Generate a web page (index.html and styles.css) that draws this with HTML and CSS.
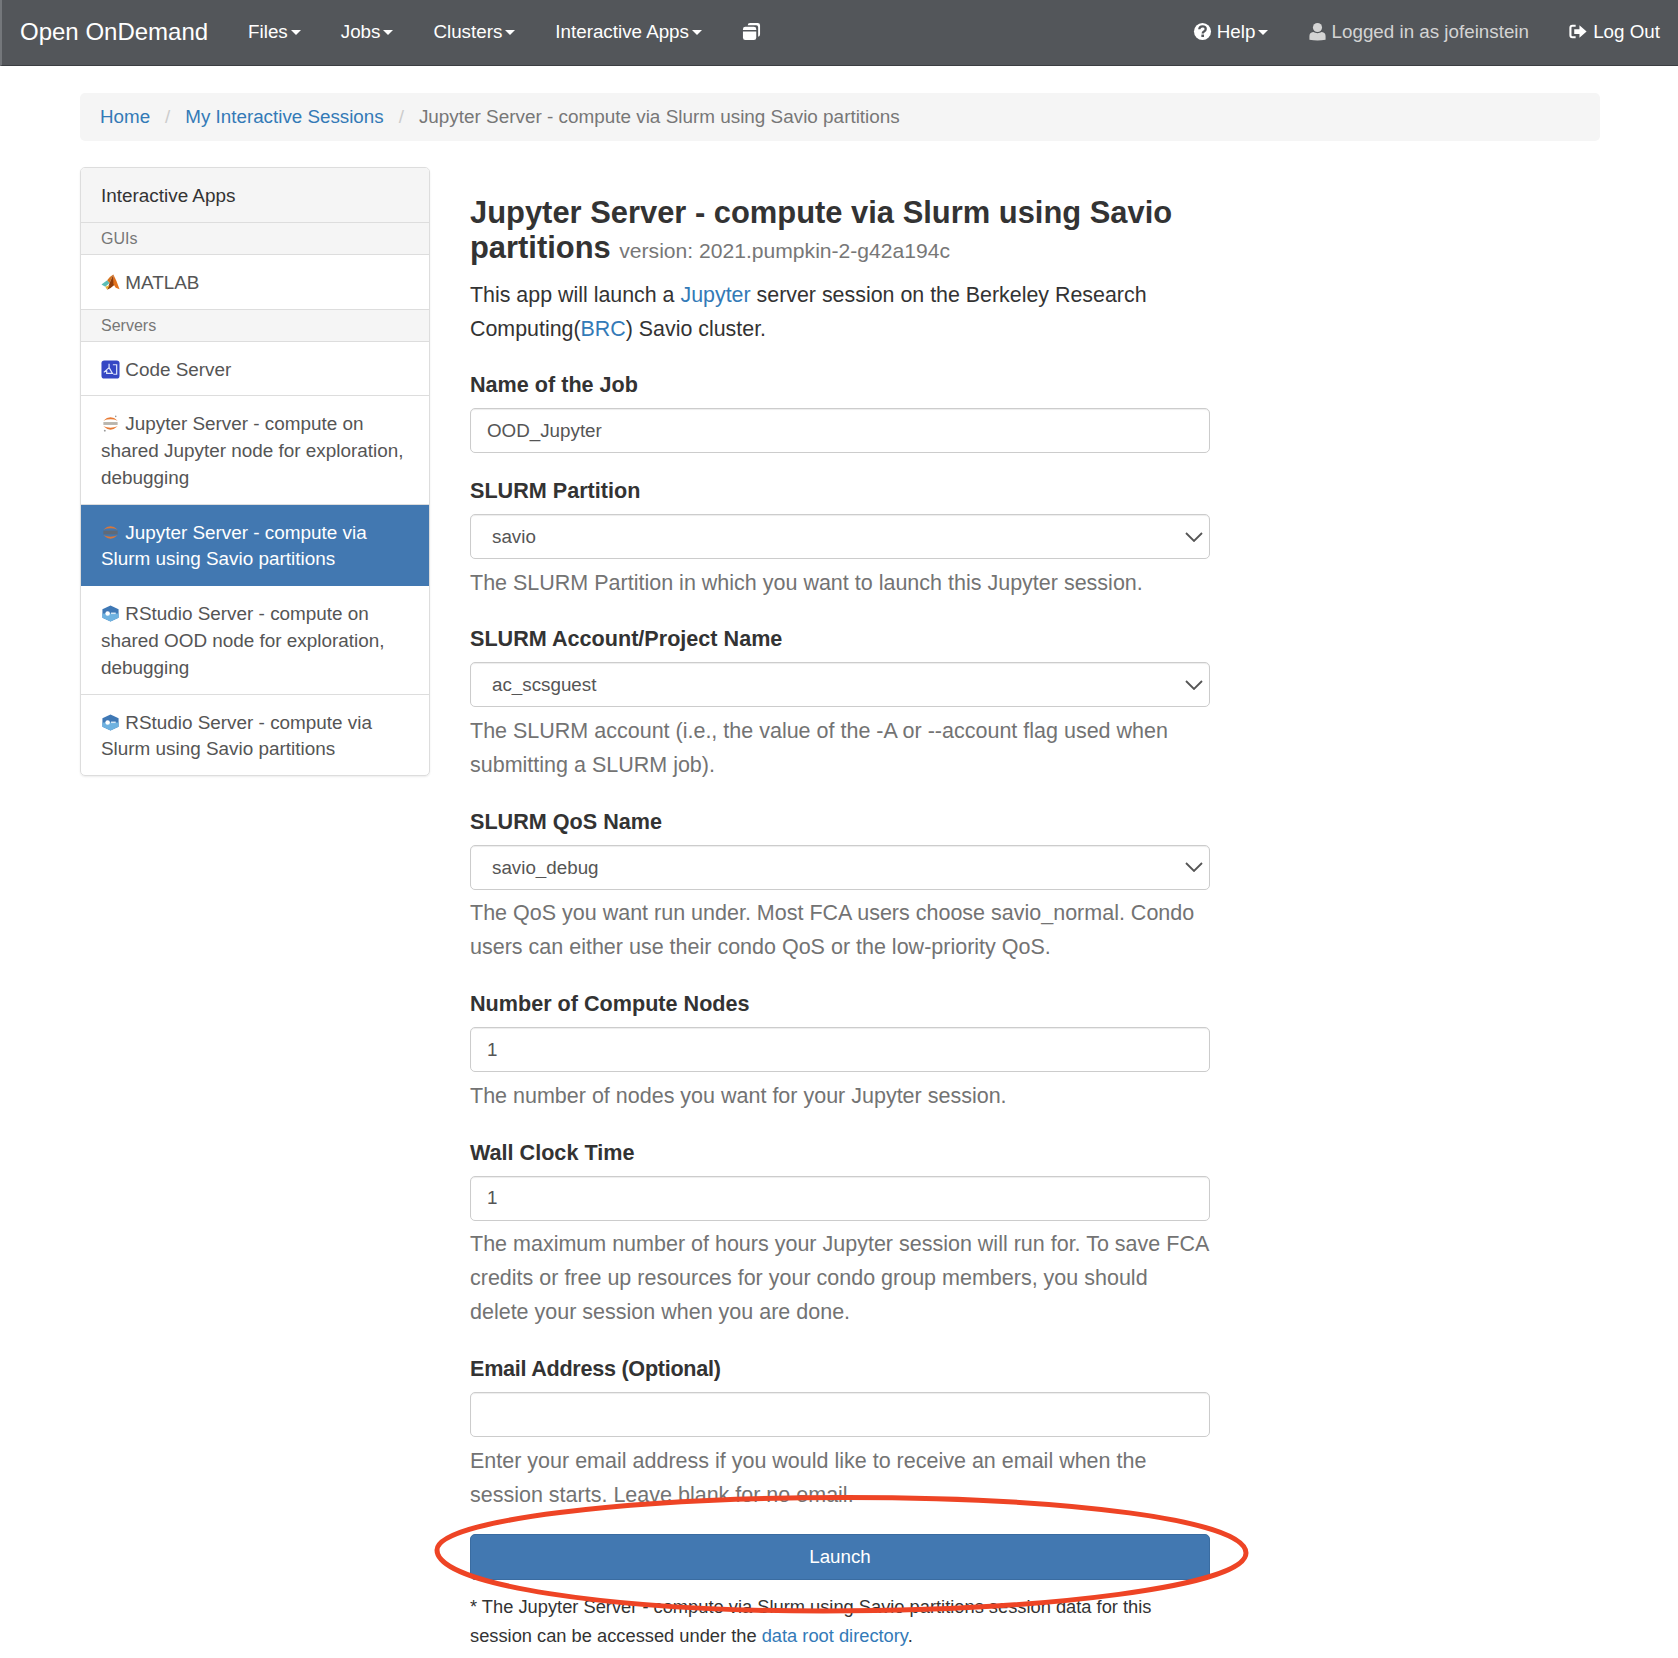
FILE: index.html
```html
<!DOCTYPE html>
<html lang="en">
<head>
    <meta charset="UTF-8">
    <meta name="viewport" content="width=device-width, initial-scale=1.0">
    <title>Open OnDemand</title>
    <link rel="stylesheet" href="styles.css">
</head>
<body>

    <nav class="navbar">
        <a class="brand" href="#">Open OnDemand</a>
        <ul class="nav-list">
            <li><a href="#">Files<span class="caret"></span></a></li>
            <li><a href="#">Jobs<span class="caret"></span></a></li>
            <li><a href="#">Clusters<span class="caret"></span></a></li>
            <li><a href="#">Interactive Apps<span class="caret"></span></a></li>
            <li><a href="#" aria-label="My Interactive Sessions">
                <svg class="nav-icon" viewBox="0 0 20 20">
                    <path d="M6 3.5 Q6 1 8.5 1 H16.5 Q19 1 19 3.5 V13 Q19 15.5 17 15.5 V5.5 Q17 3.5 15 3.5 Z" fill="#fff"/>
                    <path d="M1 7.5 Q1 5 3.5 5 H12.5 Q15 5 15 7.5 V8.5 H1 Z" fill="#fff"/>
                    <path d="M1 10 H15 V16.5 Q15 19 12.5 19 H3.5 Q1 19 1 16.5 Z" fill="#fff"/>
                </svg>
            </a></li>
        </ul>
        <ul class="nav-list nav-right">
            <li><a href="#">
                <svg class="nav-icon" viewBox="0 0 20 20">
                    <circle cx="10" cy="10" r="9" fill="#fff"/>
                    <path d="M6.6 7.6 Q6.8 4.6 10 4.6 Q13.4 4.6 13.4 7.3 Q13.4 8.9 11.6 9.9 Q10.2 10.7 10.2 12" fill="none" stroke="#53565a" stroke-width="2.4"/>
                    <rect x="8.8" y="13.2" width="2.8" height="2.6" fill="#53565a"/>
                </svg>
                Help<span class="caret"></span></a></li>
            <li class="user-item">
                <svg class="nav-icon" viewBox="0 0 20 20">
                    <circle cx="10" cy="5.8" r="4.8" fill="#d4d4d4"/>
                    <path d="M1.5 18.8 V15 Q1.5 11 5.5 10.6 Q10 13 14.5 10.6 Q18.5 11 18.5 15 V18.8 Q10 20 1.5 18.8 Z" fill="#d4d4d4"/>
                </svg>
                Logged in as jofeinstein</li>
            <li><a href="#">
                <svg class="nav-icon" viewBox="0 0 20 20">
                    <path d="M7 4 H3.5 Q1.5 4 1.5 6 V14 Q1.5 16 3.5 16 H7" fill="none" stroke="#fff" stroke-width="2.2"/>
                    <path d="M5.5 7.5 H11 V3.5 L18.5 10 L11 16.5 V12.5 H5.5 Z" fill="#fff"/>
                </svg>
                Log Out</a></li>
        </ul>
    </nav>

    <div class="container">
        <ol class="breadcrumb">
            <li><a href="#">Home</a></li>
            <li><a href="#">My Interactive Sessions</a></li>
            <li class="current">Jupyter Server - compute via Slurm using Savio partitions</li>
        </ol>

        <div class="columns">
            <aside class="sidebar">
                <div class="side-title">Interactive Apps</div>
                <div class="side-group">GUIs</div>
                <a class="side-item" href="#">
                    <svg class="app-icon" viewBox="0 0 20 20">
                        <path d="M0.5 12 L6.5 7.5 L9 10.5 L4.5 14.5 Z" fill="#5cbdb5"/>
                        <path d="M6.5 7.5 L9 10.5 L13 1.5 Q10 3 6.5 7.5 Z" fill="#d4741f"/>
                        <path d="M13 1.5 L9 10.5 L6.5 17.5 Q11 15.5 14 12.5 Z" fill="#8f3d0c"/>
                        <path d="M13 1.5 L13 11.5 L15.5 15.5 L19.5 17 Q16.5 8 13 1.5 Z" fill="#e2711c"/>
                        <path d="M4.5 14.5 L6.5 17.5 L9 13 Z" fill="#e8b23a"/>
                    </svg>
                    MATLAB</a>
                <div class="side-group">Servers</div>
                <a class="side-item" href="#">
                    <svg class="app-icon" viewBox="0 0 20 20">
                        <rect x="0.5" y="0.5" width="19" height="19" rx="3" fill="#3547c4"/>
                        <path d="M3 13 L8.5 8 L8.5 4 M8.5 8 L12 14 H6 V11 M12.5 5 H16.5 V15 H13" fill="none" stroke="#dfe6fb" stroke-width="1.3"/>
                    </svg>
                    Code Server</a>
                <a class="side-item" href="#">
                    <svg class="app-icon" viewBox="0 0 20 20">
                        <path d="M2.5 7 Q10 0 17.5 7 Q10 4 2.5 7 Z" fill="#e87b35"/>
                        <path d="M2.5 13 Q10 20 17.5 13 Q10 16 2.5 13 Z" fill="#e87b35"/>
                        <rect x="2.5" y="8.5" width="15" height="3" fill="#b9b4ac"/>
                        <circle cx="4" cy="17.5" r="1" fill="#9a9a9a"/>
                        <circle cx="15.5" cy="2.5" r="0.8" fill="#9a9a9a"/>
                    </svg>
                    Jupyter Server - compute on shared Jupyter node for exploration, debugging</a>
                <a class="side-item active" href="#">
                    <svg class="app-icon" viewBox="0 0 20 20">
                        <path d="M2.5 7 Q10 0 17.5 7 Q10 4 2.5 7 Z" fill="#d9773a"/>
                        <path d="M2.5 13 Q10 20 17.5 13 Q10 16 2.5 13 Z" fill="#d9773a"/>
                        <rect x="2.5" y="8" width="15" height="4" fill="#5f6a78"/>
                    </svg>
                    Jupyter Server - compute via Slurm using Savio partitions</a>
                <a class="side-item" href="#">
                    <svg class="app-icon" viewBox="0 0 20 20">
                        <path d="M10 1.5 L18.5 5.5 V14.5 L10 18.5 L1.5 14.5 V5.5 Z" fill="#3f78b5"/>
                        <path d="M1.5 10 H18.5 V14.5 L10 18.5 L1.5 14.5 Z" fill="#6fb2e0"/>
                        <circle cx="7" cy="10" r="2.4" fill="#fff"/>
                        <rect x="10.5" y="9" width="5" height="1.6" fill="#d5e6f5"/>
                    </svg>
                    RStudio Server - compute on shared OOD node for exploration, debugging</a>
                <a class="side-item" href="#">
                    <svg class="app-icon" viewBox="0 0 20 20">
                        <path d="M10 1.5 L18.5 5.5 V14.5 L10 18.5 L1.5 14.5 V5.5 Z" fill="#3f78b5"/>
                        <path d="M1.5 10 H18.5 V14.5 L10 18.5 L1.5 14.5 Z" fill="#6fb2e0"/>
                        <circle cx="7" cy="10" r="2.4" fill="#fff"/>
                        <rect x="10.5" y="9" width="5" height="1.6" fill="#d5e6f5"/>
                    </svg>
                    RStudio Server - compute via Slurm using Savio partitions</a>
            </aside>

            <main class="content">
                <h3 class="app-title">Jupyter Server - compute via Slurm using Savio partitions <small>version: 2021.pumpkin-2-g42a194c</small></h3>
                <p class="lead-text">This app will launch a <a href="#">Jupyter</a> server session on the Berkeley Research Computing(<a href="#">BRC</a>) Savio cluster.</p>

                <form>
                    <div class="form-group">
                        <label for="job">Name of the Job</label>
                        <input class="field" type="text" id="job" value="OOD_Jupyter">
                    </div>
                    <div class="form-group">
                        <label for="partition">SLURM Partition</label>
                        <select class="field select" id="partition"><option>savio</option></select>
                        <p class="help">The SLURM Partition in which you want to launch this Jupyter session.</p>
                    </div>
                    <div class="form-group">
                        <label for="account">SLURM Account/Project Name</label>
                        <select class="field select" id="account"><option>ac_scsguest</option></select>
                        <p class="help">The SLURM account (i.e., the value of the -A or --account flag used when submitting a SLURM job).</p>
                    </div>
                    <div class="form-group">
                        <label for="qos">SLURM QoS Name</label>
                        <select class="field select" id="qos"><option>savio_debug</option></select>
                        <p class="help">The QoS you want run under. Most FCA users choose savio_normal. Condo users can either use their condo QoS or the low-priority QoS.</p>
                    </div>
                    <div class="form-group">
                        <label for="nodes">Number of Compute Nodes</label>
                        <input class="field" type="text" id="nodes" value="1">
                        <p class="help">The number of nodes you want for your Jupyter session.</p>
                    </div>
                    <div class="form-group">
                        <label for="wall">Wall Clock Time</label>
                        <input class="field" type="text" id="wall" value="1">
                        <p class="help">The maximum number of hours your Jupyter session will run for. To save FCA credits or free up resources for your condo group members, you should delete your session when you are done.</p>
                    </div>
                    <div class="form-group">
                        <label class="label-tight" for="email">Email Address (Optional)</label>
                        <input class="field" type="text" id="email">
                        <p class="help">Enter your email address if you would like to receive an email when the session starts. Leave blank for no email.</p>
                    </div>
                    <button class="launch" type="button">Launch</button>
                </form>

                <p class="foot">* The Jupyter Server - compute via Slurm using Savio partitions session data for this session can be accessed under the <a href="#">data root directory</a>.</p>
            </main>
        </div>
    </div>

    <!-- red hand drawn circle round the button -->
    <svg class="scribble" viewBox="0 0 830 130">
        <path d="M418 7.5 C640 7.5 818 30 818 63 C818 96 620 121 395 121 C180 121 9 95 9 60 C9 30 200 7.5 418 7.5 Z" fill="none" stroke="#ee4425" stroke-width="5"/>
    </svg>

</body>
</html>
```

FILE: styles.css
```css
body {
    margin: 0;
    position: relative;
    font-family: "Liberation Sans", Arial, sans-serif;
    font-size: 18.8px;
    line-height: 26.7px;
    color: #333;
    background: #fff;
}

a {
    color: #337ab7;
    text-decoration: none;
}

.navbar {
    display: flex;
    align-items: center;
    height: 65px;
    background-color: #53565a;
    border-left: 2px solid #74777b;
    border-bottom: 1px solid #3b3e42;
    box-sizing: content-box;
}

.brand {
    padding: 0 20px 0 18px;
    font-size: 24px;
    color: #fff;
}

.nav-list {
    display: flex;
    align-items: center;
    list-style: none;
    margin: 0;
    padding: 0;
}

.nav-list li {
    padding: 0 20px;
    white-space: nowrap;
}

.nav-list a {
    color: #fff;
}

.nav-right {
    margin-left: auto;
}

.nav-right li:last-child {
    padding-right: 18px;
}

.user-item {
    color: #d4d4d4;
}

.user-item .nav-icon {
    margin-right: -1px;
}

.nav-icon {
    width: 19px;
    height: 19px;
    vertical-align: -3px;
}

.caret {
    display: inline-block;
    margin-left: 3px;
    vertical-align: 3px;
    border-top: 5px solid #fff;
    border-left: 5px solid transparent;
    border-right: 5px solid transparent;
}

.container {
    padding: 27px 78px 0 80px;
}

.breadcrumb {
    display: flex;
    list-style: none;
    margin: 0 0 26px;
    padding: 11px 20px;
    height: 26px;
    background-color: #f5f5f5;
    border-radius: 5px;
}

.breadcrumb li + li::before {
    content: "/";
    padding: 0 15px;
    color: #ccc;
}

.breadcrumb .current {
    font-size: 18.9px;
    color: #777;
}

.columns {
    display: grid;
    grid-template-columns: 350px 740px;
    gap: 40px;
    align-items: start;
}

.sidebar {
    font-size: 18.9px;
    border: 1px solid #ddd;
    border-radius: 5px;
    overflow: hidden;
    box-shadow: 0 1px 2px rgba(0, 0, 0, 0.08);
}

.side-title {
    padding: 15px 20px 12px;
    background-color: #f5f5f5;
    border-bottom: 1px solid #ddd;
}

.side-group {
    padding: 4px 20px;
    height: 23px;
    font-size: 16px;
    line-height: 23px;
    color: #777;
    background-color: #f5f5f5;
    border-bottom: 1px solid #ddd;
}

.side-item {
    display: block;
    padding: 15px 20px 12.2px;
    color: #555;
    border-bottom: 1px solid #ddd;
}

.side-item:last-child {
    border-bottom: none;
}

.side-item.active {
    color: #fff;
    background-color: #4278b1;
    border-bottom-color: #4278b1;
}

.app-icon {
    width: 19px;
    height: 19px;
    vertical-align: -3px;
}

.content {
    padding-top: 28px;
}

.app-title {
    margin: 0 0 10px;
    font-size: 30.9px;
    line-height: 35px;
    font-weight: bold;
}

.app-title small {
    font-size: 21.1px;
    font-weight: normal;
    color: #777;
}

.lead-text {
    margin: 0 0 22px;
    font-size: 21.4px;
    line-height: 34px;
}

.form-group {
    margin-bottom: 21px;
}

label {
    display: block;
    margin-bottom: 6px;
    font-size: 21.6px;
    line-height: 34px;
    font-weight: bold;
}

.label-tight {
    letter-spacing: -0.27px;
}

.field {
    display: block;
    box-sizing: border-box;
    width: 100%;
    height: 45px;
    padding: 0 16px;
    font-family: inherit;
    font-size: 18.8px;
    color: #555;
    background-color: #fff;
    border: 1px solid #ccc;
    border-radius: 5px;
    box-shadow: inset 0 1px 1px rgba(0, 0, 0, 0.075);
}

.select {
    padding-left: 21px;
    appearance: none;
    -webkit-appearance: none;
    background-image: url("data:image/svg+xml,%3Csvg xmlns='http://www.w3.org/2000/svg' width='18' height='10'%3E%3Cpath d='M1 1l8 8 8-8' fill='none' stroke='%23555' stroke-width='1.8'/%3E%3C/svg%3E");
    background-repeat: no-repeat;
    background-position: right 6px center;
}

.help {
    margin: 6.7px 0 0;
    padding-bottom: 1.7px;
    font-size: 21.5px;
    line-height: 34px;
    color: #737373;
}

.launch {
    display: block;
    width: 100%;
    height: 46px;
    margin-top: -0.6px;
    font-family: inherit;
    font-size: 18.8px;
    color: #fff;
    background-color: #4278b1;
    border: 1px solid #3a6ca1;
    border-radius: 5px;
}

.foot {
    margin: 12px 0 0;
    font-size: 18.3px;
    line-height: 29px;
}

.scribble {
    position: absolute;
    left: 428px;
    top: 1490px;
    width: 830px;
    height: 130px;
}
```
